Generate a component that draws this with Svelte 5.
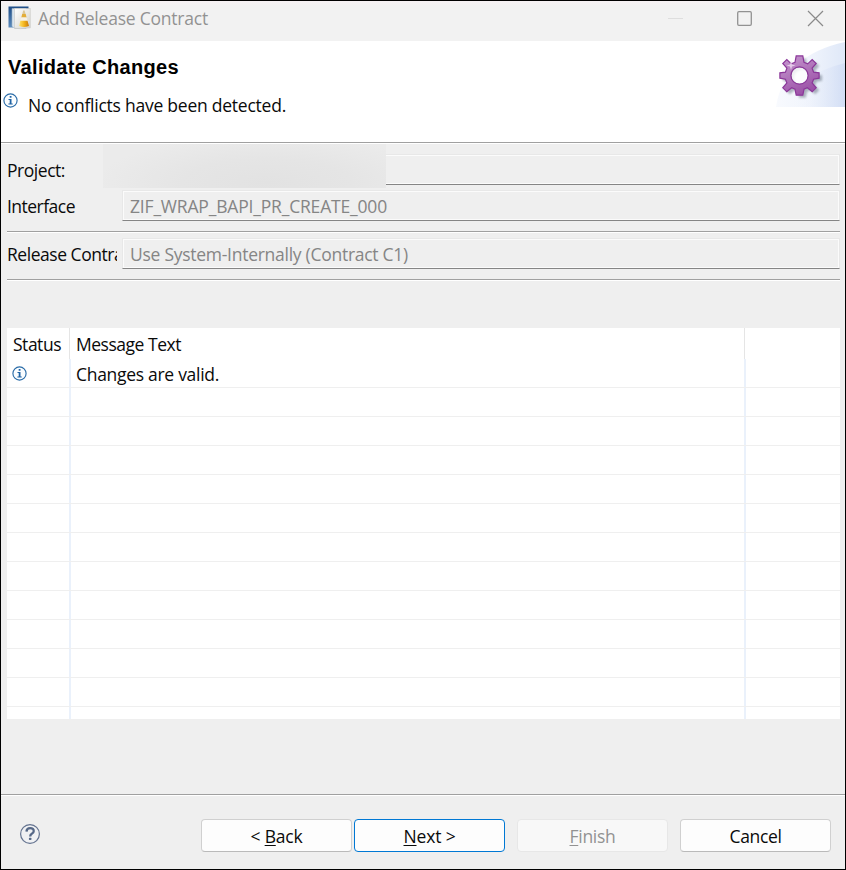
<script>
  // Spreads the glyphs of a label evenly so that it fills the given width.
  function fit(node, width) {
    const range = document.createRange();
    range.selectNodeContents(node);
    const natural = range.getBoundingClientRect().width;
    node.style.letterSpacing = (width - natural) / node.textContent.length + 'px';
  }

  const rows = [{ text: 'Changes are valid.' }, ...Array(11).fill({ text: '' })];
</script>

{#snippet info()}
  <svg class="info" width="15" height="15" viewBox="0 0 15 15">
    <circle cx="7.5" cy="7.5" r="6.6" fill="#fafdff" stroke="#2b6ca8" stroke-width="1.15" />
    <path d="M6.7 3h1.8v1.7H6.7zM5.5 6h3v4.6h1.2v.9H5.4v-.9h1.3V6.9H5.5z" fill="#1f63a4" />
  </svg>
{/snippet}

<div class="window">
  <div class="titlebar">
    <svg class="logo" width="24" height="25" viewBox="0 0 24 25">
      <defs>
        <linearGradient id="blue" x2="0" y2="1"><stop stop-color="#1e4c86" /><stop offset="1" stop-color="#5c8cbd" /></linearGradient>
        <linearGradient id="paper" x2="1" y2="1"><stop stop-color="#fff" /><stop offset="1" stop-color="#d4d2ca" /></linearGradient>
        <linearGradient id="cone"><stop stop-color="#ffe36a" /><stop offset=".5" stop-color="#f3b41c" /><stop offset="1" stop-color="#c87808" /></linearGradient>
      </defs>
      <path d="M.5.5h20v3H5v18H.5z" fill="url(#blue)" />
      <path d="M4 2.5h14v20H7l-3-2z" fill="#dbe5ee" stroke="#9db1c4" stroke-width=".6" />
      <path d="M6.5 2.5h15.8v19.3l-9.8.9-6-.5z" fill="url(#paper)" stroke="#c8c8c4" stroke-width=".6" />
      <path d="M15.2 4.5h1.4l1.1 4h-3.5z" fill="#dcc694" />
      <path d="M14.2 8h3.5l.9 3.4h-5.3z" fill="#e3ad38" />
      <path d="M13.3 11.4h5.3l1 3.6h-7.3z" fill="#f7f1e4" />
      <path d="M12.3 14.7h7.2l1.5 5.4q-5 2-9.8 0z" fill="url(#cone)" />
    </svg>
    <span class="caption" use:fit={170}>Add Release Contract</span>
    <svg class="controls" width="160" height="20" viewBox="0 0 160 20" fill="none">
      <path d="M0 9.5h15" stroke="#dedede" />
      <rect x="69.7" y="2.7" width="13.6" height="13.6" rx="1.2" stroke="#929292" stroke-width="1.3" />
      <path d="M140 2l15 15M155 2l-15 15" stroke="#8a8a8a" stroke-width="1.2" />
    </svg>
  </div>

  <header>
    <div class="heading">
      <h1 use:fit={171}>Validate Changes</h1>
      <div class="message">{@render info()}<span use:fit={258}>No conflicts have been detected.</span></div>
    </div>
    <svg class="banner" width="69" height="66" viewBox="0 0 69 66">
      <defs>
        <linearGradient id="sky"><stop stop-color="#f8fafe" /><stop offset=".5" stop-color="#f0f4fc" /><stop offset="1" stop-color="#dfe8f8" /></linearGradient>
        <linearGradient id="sky2"><stop stop-color="#fff" stop-opacity="0" /><stop offset="1" stop-color="#cbd8f3" /></linearGradient>
        <linearGradient id="purple" x2=".5" y2="1"><stop stop-color="#c79bd0" /><stop offset="1" stop-color="#9c52a8" /></linearGradient>
        <filter id="soft" x="-20%" y="-20%" width="140%" height="140%"><feGaussianBlur stdDeviation="1" /></filter>
        <path id="gear" fill-rule="evenodd" d="M-3.3-19.6h6.6l1.2 6.4 3.7 1.6 4.5-4.4 4 4-4.1 4.7 1.5 3.9 5.5.7v5.4l-5.5 1-1.5 3.7 4.1 4.9-4 4-4.9-4-3.3 1.4-1.2 6h-6.6l-1.2-6-3.3-1.4-4.9 4-4-4 4.1-4.9-1.5-3.7-5.5-1v-5.4l5.5-.7 1.5-3.9-4.1-4.7 4-4 4.5 4.4 3.7-1.6zM0-8.6A8.6 8.6 0 1 0 0 8.6 8.6 8.6 0 1 0 0-8.6z" />
      </defs>
      <path d="M0 66Q8 14 69 1v65z" fill="url(#sky)" />
      <path d="M12 66Q20 34 69 22v44z" fill="url(#sky2)" opacity=".65" />
      <use href="#gear" x="26.5" y="37" fill="#555f70" opacity=".45" filter="url(#soft)" />
      <circle cx="23.5" cy="34.5" r="8" fill="#fff" opacity=".8" />
      <use href="#gear" x="23.5" y="34.5" fill="url(#purple)" stroke="#8b3799" stroke-width="1.2" />
      <path d="M15 20l1 3.5 3.5 1-3.5 1-1 3.5-1-3.5-3.5-1 3.5-1z" fill="#efdcf2" opacity=".8" />
    </svg>
  </header>

  <main>
    <div class="field project">
      <label for="project" use:fit={58}>Project:</label>
      <div class="input" id="project"></div>
      <div class="redacted"></div>
    </div>
    <div class="field">
      <span class="label"><span use:fit={68}>Interface</span></span>
      <div class="input"><span use:fit={257}>ZIF_WRAP_BAPI_PR_CREATE_000</span></div>
    </div>
    <div class="rule"></div>
    <div class="field">
      <span class="label"><span use:fit={134}>Release Contract:</span></span>
      <div class="input"><span use:fit={278}>Use System-Internally (Contract C1)</span></div>
    </div>
    <div class="rule"></div>

    <div class="table">
      <div class="thead">
        <div class="c1"><span use:fit={48}>Status</span></div>
        <div class="c2"><span use:fit={105}>Message Text</span></div>
        <div class="c3"></div>
      </div>
      {#each rows as row}
        <div class="tr">
          <div class="c1">{#if row.text}{@render info()}{/if}</div>
          <div class="c2">{#if row.text}<span use:fit={143}>{row.text}</span>{/if}</div>
          <div class="c3"></div>
        </div>
      {/each}
      <div class="tr rest"><div class="c1"></div><div class="c2"></div><div class="c3"></div></div>
    </div>
  </main>

  <footer>
    <svg class="help" width="22" height="22" viewBox="0 0 22 22">
      <circle cx="11" cy="11" r="9.4" fill="#f0f1f3" stroke="#63728f" stroke-width="1.2" />
      <path d="M7.5 8.6Q7.6 5.2 11.2 5.2T14.7 8.2Q14.7 9.8 12.8 10.8 11.2 11.7 11.2 13.4" fill="none" stroke="#566887" stroke-width="2.3" />
      <rect x="9.9" y="14.7" width="2.6" height="2.4" rx=".8" fill="#566887" />
    </svg>
    <button class="back"><span use:fit={52}>&lt; <u>B</u>ack</span></button>
    <button class="next"><span use:fit={52}><u>N</u>ext &gt;</span></button>
    <button class="finish" disabled><span use:fit={46}><u>F</u>inish</span></button>
    <button class="cancel"><span use:fit={52}>Cancel</span></button>
  </footer>
</div>

<style>
  :global(body) { margin: 0; }
  .window {
    box-sizing: border-box;
    width: 846px;
    height: 870px;
    border: 1px solid #000;
    background: #efefef;
    display: flex;
    flex-direction: column;
    font: 17.5px/24px "Open Sans", "Noto Sans", sans-serif;
    color: #0a0a0a;
    white-space: nowrap;
    overflow: hidden;
  }
  svg { display: block; flex: none; }
  .titlebar {
    height: 40px;
    flex: none;
    display: flex;
    align-items: flex-start;
    background: linear-gradient(#f7f2f4, #f2f2f2 5px);
    color: #929292;
  }
  .logo { margin: 5px 0 0 7px; }
  .caption { margin: 5px 0 0 6px; }
  .controls { margin: 8px 17px 0 auto; }
  header {
    height: 101px;
    flex: none;
    display: flex;
    justify-content: space-between;
    background: #fff;
    border-bottom: 1px solid #a0a0a0;
  }
  h1 {
    margin: 14px 0 0 7px;
    font: bold 20px/24px "Liberation Sans", Arial, sans-serif;
    color: #000;
  }
  .message { display: flex; margin-top: 14px; }
  .message .info { margin: 0 10px 0 1.5px; }
  .message span { margin-left: .5px; }
  main {
    flex: 1;
    border-top: 1px solid #fff;
    border-bottom: 1px solid #a0a0a0;
    padding: 10px 5px 0 6px;
  }
  .field {
    position: relative;
    display: flex;
    align-items: center;
    height: 31px;
    margin-bottom: 5px;
  }
  label, .label { width: 110px; height: 25px; padding-top: 1px; box-sizing: border-box; overflow: hidden; flex: none; }
  .input {
    flex: 1;
    box-sizing: border-box;
    height: 31px;
    margin-left: 5px;
    padding: 3px 0 0 7px;
    border: 1px solid #e8e8e8;
    border-bottom-color: #858585;
    box-shadow: inset 0 0 0 1px #fbfbfb;
    color: #858585;
  }
  .redacted {
    position: absolute;
    left: 96px;
    top: -10px;
    width: 283px;
    height: 44px;
    background: radial-gradient(ellipse 170px 48px at 58% 88%, #e2e2e2, #e5e5e5 50%, #ebebeb);
  }
  .rule {
    height: 1px;
    margin: 10px 0 5px;
    background: #a0a0a0;
    border-bottom: 1px solid #fff;
  }
  .table {
    margin-top: 47px;
    height: 391px;
    background: #fff;
    overflow: hidden;
  }
  .thead, .tr { display: flex; }
  .thead { height: 31px; }
  .thead > div { padding-top: 4px; box-sizing: border-box; }
  .tr { height: 29px; }
  .tr > div { box-sizing: border-box; border-bottom: 1px solid #efefef; }
  .thead .c1 { padding-left: 6px; }
  .thead .c2 { padding-left: 6px; }
  .rest > div { border-bottom: 0; }
  .c1 { width: 62px; padding-left: 4.5px; }
  .c2 { width: 675px; padding-left: 6px; border-left: 1px solid #e5e5e5; }
  .c3 { width: 96px; border-left: 1px solid #e5e5e5; }
  .tr .c2, .tr .c3 {
    border-left: 0;
    background: linear-gradient(#eaf1fb, #eaf1fb) 0 0 / 2px 100% no-repeat border-box;
  }
  .tr .c2 { padding: 3px 0 0 7px; }
  .tr .c1 { padding-top: 7px; }
  footer {
    height: 74px;
    flex: none;
    box-sizing: border-box;
    border-top: 1px solid #fff;
    padding: 23px 14px 0 18px;
    display: flex;
    align-items: flex-start;
  }
  .help { margin: 4px auto 0 0; }
  button {
    box-sizing: border-box;
    width: 151px;
    height: 33px;
    padding: 0;
    font: inherit;
    color: #0a0a0a;
    background: #fdfdfd;
    border: 1px solid #d0d0d0;
    border-bottom-color: #bababa;
    border-radius: 4px;
  }
  button span { display: block; }
  u { text-decoration-thickness: 1px; text-underline-offset: 2px; }
  .back { margin-right: 2px; }
  .next { border-color: #0078d4; }
  .finish { margin: 0 12px; color: #929292; background: #f8f8f8; border-color: #e7e7e7; }
</style>
